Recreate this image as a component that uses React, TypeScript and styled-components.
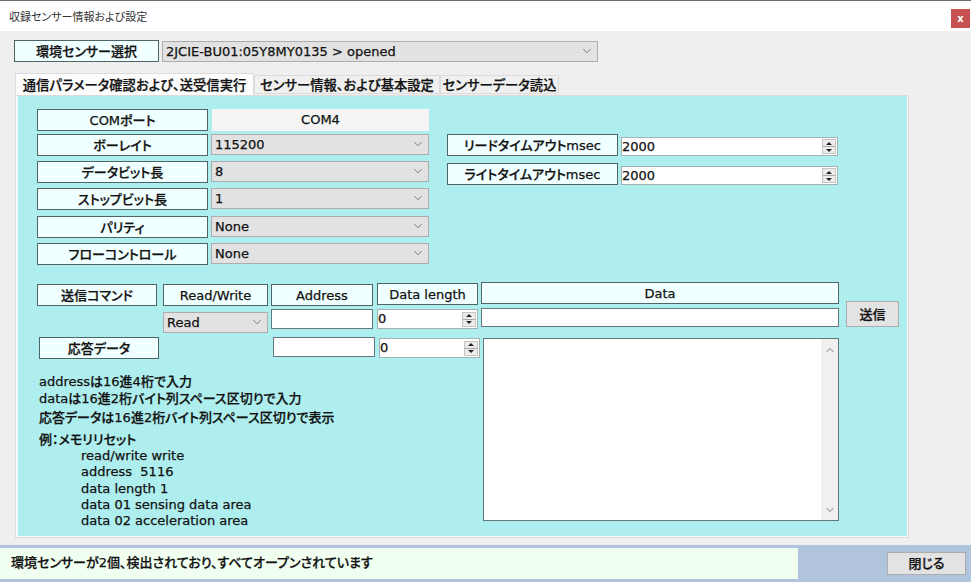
import { createGlobalStyle, styled } from "styled-components";
import { ChevronDown, ChevronUp } from "lucide-react";

const GlobalStyle = createGlobalStyle`
  html, body {
    margin: 0;
    padding: 0;
    height: 100%;
    overflow: hidden;
    background: #efefef;
  }
  * {
    box-sizing: border-box;
  }
`;

const Window = styled.div`
  display: flex;
  flex-direction: column;
  width: 971px;
  height: 582px;
  color: #111;
  font-family: "DejaVu Sans", "Noto Sans CJK JP", sans-serif;
  font-size: 13px;
  font-weight: 500;
  font-feature-settings: "palt";
  -webkit-text-stroke: 0.25px #111;
`;

const TitleBar = styled.div`
  display: flex;
  align-items: center;
  justify-content: space-between;
  height: 31px;
  padding: 0 1px 0 9px;
  background: #fff;
  border-top: 1px solid #6e6e6e;
`;

const Title = styled.span`
  color: #333;
  font-size: 11px;
  font-weight: 400;
  -webkit-text-stroke: 0;
`;

const CloseIcon = styled.div`
  display: flex;
  align-items: center;
  justify-content: center;
  width: 19px;
  height: 19px;
  margin-top: 4px;
  background: #c75050;
  color: #fff;
  font-size: 10px;
  font-weight: 700;
  -webkit-text-stroke: 0;
`;

const Body = styled.div`
  flex: 1;
  padding: 9px 0 0 14px;
`;

const SensorRow = styled.div`
  display: flex;
  gap: 3px;
`;

const Label = styled.div<{ $w: number; $mt?: number; $ml?: number; $latin?: boolean }>`
  display: flex;
  align-items: center;
  justify-content: center;
  flex: none;
  width: ${(p) => p.$w}px;
  height: 22px;
  margin-top: ${(p) => p.$mt ?? 0}px;
  margin-left: ${(p) => p.$ml ?? 0}px;
  padding-bottom: ${(p) => (p.$latin ? 0 : 1)}px;
  background: #f0ffff;
  border: 1px solid #4f6464;
  white-space: nowrap;
`;

const SelectBox = styled.div<{ $w: number; $mt?: number }>`
  display: flex;
  align-items: center;
  justify-content: space-between;
  flex: none;
  width: ${(p) => p.$w}px;
  height: 21px;
  margin-top: ${(p) => p.$mt ?? 0}px;
  padding: 0 3px 1px 3px;
  background: #e2e2e2;
  border: 1px solid #adadad;
  svg {
    color: #555;
    flex: none;
  }
`;

const Select = ({ value, w, mt }: { value: string; w: number; mt?: number }) => (
  <SelectBox $w={w} $mt={mt}>
    {value}
    <ChevronDown size={14} strokeWidth={1.2} />
  </SelectBox>
);

const Tabs = styled.div`
  display: flex;
  align-items: flex-end;
  height: 22px;
  margin: 11px 0 0 1px;
`;

const Tab = styled.div<{ $active?: boolean; $w: number }>`
  display: flex;
  align-items: center;
  justify-content: center;
  width: ${(p) => p.$w}px;
  height: ${(p) => (p.$active ? 22 : 19)}px;
  margin-bottom: ${(p) => (p.$active ? 0 : 1)}px;
  background: ${(p) => (p.$active ? "#fcfcfc" : "#f0f0f0")};
  border: 1px solid #dcdcdc;
  border-bottom: ${(p) => (p.$active ? "none" : "1px solid #dcdcdc")};
  font-size: 13.3px;
  white-space: nowrap;
`;

const TabPanel = styled.div`
  width: 894px;
  height: 443px;
  margin-left: 1px;
  padding: 13px 0 0 19px;
  background: #afeeee;
  border-style: solid;
  border-color: #fafafa;
  border-width: 1px 2px 2px 3px;
  outline: 1px solid #dcdcdc;
  outline-offset: -1px;
`;

const ParamSection = styled.div`
  display: flex;
  gap: 18px;
`;

const Column = styled.div<{ $w: number; $mt?: number }>`
  width: ${(p) => p.$w}px;
  margin-top: ${(p) => p.$mt ?? 0}px;
`;

const Row = styled.div<{ $gap?: number; $mt?: number }>`
  display: flex;
  align-items: flex-start;
  gap: ${(p) => p.$gap ?? 3}px;
  margin-top: ${(p) => p.$mt ?? 0}px;
`;

const ReadOnlyValue = styled.div`
  display: flex;
  align-items: center;
  justify-content: center;
  width: 217px;
  height: 22px;
  margin-left: 1px;
  padding-bottom: 1px;
  background: #f5f5f5;
`;

const SpinBox = styled.div<{ $w: number; $h: number; $mt?: number; $ml?: number }>`
  display: flex;
  align-items: center;
  justify-content: space-between;
  flex: none;
  width: ${(p) => p.$w}px;
  height: ${(p) => p.$h}px;
  margin-top: ${(p) => p.$mt ?? 0}px;
  margin-left: ${(p) => p.$ml ?? 0}px;
  padding: 0 1px 1px 0;
  background: #fff;
  border: 1px solid #a3b1b1;
`;

const SpinButtons = styled.div`
  display: flex;
  flex-direction: column;
  flex: none;
  width: 14px;
  height: 15px;
  margin-top: 1px;
  background: #ececec;
  border: 1px solid #c4c4c4;
`;

const SpinCell = styled.span<{ $down?: boolean }>`
  display: flex;
  align-items: center;
  justify-content: center;
  flex: 1;
  border-top: ${(p) => (p.$down ? "1px solid #a8a8a8" : "none")};
  &::after {
    content: "";
    border-left: 3.5px solid transparent;
    border-right: 3.5px solid transparent;
    border-bottom: ${(p) => (p.$down ? "none" : "3px solid #222")};
    border-top: ${(p) => (p.$down ? "3px solid #222" : "none")};
  }
`;

const Spin = ({
  value,
  w,
  h = 20,
  mt,
  ml,
}: {
  value: string;
  w: number;
  h?: number;
  mt?: number;
  ml?: number;
}) => (
  <SpinBox $w={w} $h={h} $mt={mt} $ml={ml}>
    {value}
    <SpinButtons>
      <SpinCell />
      <SpinCell $down />
    </SpinButtons>
  </SpinBox>
);

const CommandGrid = styled.div`
  display: grid;
  grid-template-columns: 126px 108px 106px 104px 358px auto;
  grid-template-rows: 26px auto;
  width: 862px;
  margin-top: 17px;
`;

const TextInput = styled.input<{ $w: number; $h?: number; $mt?: number; $ml?: number }>`
  display: block;
  flex: none;
  width: ${(p) => p.$w}px;
  height: ${(p) => p.$h ?? 20}px;
  margin: ${(p) => p.$mt ?? 0}px 0 0 ${(p) => p.$ml ?? 0}px;
  padding: 0 2px;
  background: #fff;
  border: 1px solid #64797a;
  outline: none;
`;

const PushButton = styled.button<{ $w: number; $h: number; $ml?: number; $mt?: number }>`
  flex: none;
  width: ${(p) => p.$w}px;
  height: ${(p) => p.$h}px;
  margin: ${(p) => p.$mt ?? 0}px 0 0 ${(p) => p.$ml ?? 0}px;
  padding: 0 0 2px;
  color: inherit;
  background: #e3e3e3;
  border: 1px solid #adadad;
  font: inherit;
  font-feature-settings: inherit;
`;

const SendCell = styled.div`
  grid-column: 6;
  grid-row: 1 / span 2;
`;

const LowerSection = styled.div`
  display: flex;
  margin-top: 4px;
`;

const LowerLeft = styled.div`
  flex: none;
  width: 446px;
`;

const Notes = styled.div`
  margin: 15px 0 0 2px;
`;

const NoteLine = styled.div<{ $mt?: number; $indent?: boolean }>`
  height: 16px;
  margin-top: ${(p) => p.$mt ?? 0}px;
  margin-left: ${(p) => (p.$indent ? 42 : 0)}px;
  line-height: 16px;
  white-space: pre;
`;

const ResponseArea = styled.div`
  display: flex;
  justify-content: flex-end;
  width: 356px;
  height: 183px;
  margin-top: 1px;
  background: #fff;
  border: 1px solid #64797a;
`;

const ScrollTrack = styled.div`
  display: flex;
  flex-direction: column;
  align-items: center;
  justify-content: space-between;
  width: 17px;
  padding: 5px 0 4px;
  background: #f0f0f0;
  svg {
    color: #b0b0b0;
  }
`;

const StatusBar = styled.div`
  display: flex;
  align-items: center;
  height: 37px;
  background: #b0c4de;
`;

const StatusMessage = styled.div`
  display: flex;
  align-items: center;
  width: 798px;
  height: 31px;
  padding: 0 0 5px 11px;
  background: #f0fff0;
`;

const params = [
  { label: "ボーレイト", value: "115200", mt: 3 },
  { label: "データビット長", value: "8", mt: 5 },
  { label: "ストップビット長", value: "1", mt: 5 },
  { label: "パリティ", value: "None", mt: 6 },
  { label: "フローコントロール", value: "None", mt: 5 },
];

const notes = [
  { text: "addressは16進4桁で入力" },
  { text: "dataは16進2桁バイト列スペース区切りで入力", mt: 1 },
  { text: "応答データは16進2桁バイト列スペース区切りで表示", mt: 3 },
  { text: "例：メモリリセット", mt: 6 },
  { text: "read/write write", indent: true },
  { text: "address  5116", indent: true },
  { text: "data length 1", mt: 1, indent: true },
  { text: "data 01 sensing data area", indent: true },
  { text: "data 02 acceleration area", indent: true },
];

export default function App() {
  return (
    <Window>
      <GlobalStyle />
      <TitleBar>
        <Title>収録センサー情報および設定</Title>
        <CloseIcon>x</CloseIcon>
      </TitleBar>
      <Body>
        <SensorRow>
          <Label $w={145}>環境センサー選択</Label>
          <Select value="2JCIE-BU01:05Y8MY0135 > opened" w={436} mt={1} />
        </SensorRow>
        <Tabs>
          <Tab $active $w={239}>通信パラメータ確認および、送受信実行</Tab>
          <Tab $w={186}>センサー情報、および基本設定</Tab>
          <Tab $w={119}>センサーデータ読込</Tab>
        </Tabs>
        <TabPanel>
          <ParamSection>
            <Column $w={392}>
              <Row>
                <Label $w={171}>COMポート</Label>
                <ReadOnlyValue>COM4</ReadOnlyValue>
              </Row>
              {params.map((p) => (
                <Row key={p.label} $mt={p.mt}>
                  <Label $w={171}>{p.label}</Label>
                  <Select value={p.value} w={218} />
                </Row>
              ))}
            </Column>
            <Column $w={391} $mt={25}>
              <Row>
                <Label $w={171}>リードタイムアウトmsec</Label>
                <Spin value="2000" w={217} h={19} mt={3} />
              </Row>
              <Row $mt={7}>
                <Label $w={171}>ライトタイムアウトmsec</Label>
                <Spin value="2000" w={217} h={19} mt={3} />
              </Row>
            </Column>
          </ParamSection>
          <CommandGrid>
            <Label $w={120} $mt={2}>送信コマンド</Label>
            <Label $w={105} $mt={2} $latin>Read/Write</Label>
            <Label $w={102} $mt={2} $latin>Address</Label>
            <Label $w={101} $mt={1} $latin>Data length</Label>
            <Label $w={358} $latin>Data</Label>
            <SendCell>
              <PushButton $w={53} $h={26} $ml={7} $mt={19}>送信</PushButton>
            </SendCell>
            <div />
            <Select value="Read" w={105} mt={4} />
            <TextInput $w={102} $mt={1} />
            <Spin value="0" w={101} mt={1} />
            <TextInput $w={358} $h={19} />
          </CommandGrid>
          <LowerSection>
            <LowerLeft>
              <Row $gap={0}>
                <Label $w={120} $ml={2}>応答データ</Label>
                <TextInput $w={102} $ml={114} />
                <Spin value="0" w={101} ml={4} mt={1} />
              </Row>
              <Notes>
                {notes.map((n) => (
                  <NoteLine key={n.text} $mt={n.mt} $indent={n.indent}>
                    {n.text}
                  </NoteLine>
                ))}
              </Notes>
            </LowerLeft>
            <ResponseArea>
              <ScrollTrack>
                <ChevronUp size={12} strokeWidth={2.5} />
                <ChevronDown size={12} strokeWidth={2.5} />
              </ScrollTrack>
            </ResponseArea>
          </LowerSection>
        </TabPanel>
      </Body>
      <StatusBar>
        <StatusMessage>環境センサーが2個、検出されており、すべてオープンされています</StatusMessage>
        <PushButton $w={79} $h={23} $ml={89}>閉じる</PushButton>
      </StatusBar>
    </Window>
  );
}
